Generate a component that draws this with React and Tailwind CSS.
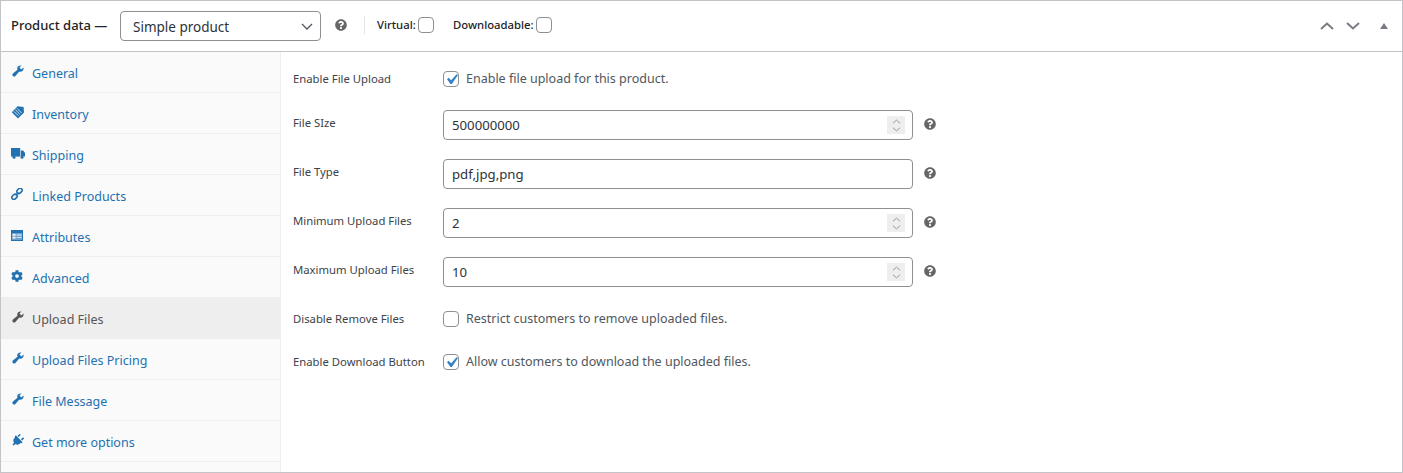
import { FaCog, FaPlug, FaQuestionCircle } from 'react-icons/fa';

const FONT = 'font-["Noto_Sans",sans-serif]';

function Wrench({ className }) {
  return (
    <svg viewBox="0 0 20 20" className={className} fill="currentColor">
      <path d="M16.68 9.77c-1.34 1.34-3.3 1.67-4.95.99l-5.41 6.52c-.99.99-2.59.99-3.58 0s-.99-2.59 0-3.58l6.52-5.41c-.68-1.65-.35-3.61.99-4.95 1.28-1.28 3.12-1.62 4.72-1.06l-2.89 2.89 2.82 2.82 2.86-2.87c.53 1.58.18 3.39-1.08 4.64z" />
    </svg>
  );
}

function Tag({ className }) {
  return (
    <svg viewBox="0 0 14 14" className={className} fill="currentColor">
      <path d="M6.6 1.2 12.6 2l.4 5.4-6 6L.8 7.2z" />
      <path d="M4.4 4.8 9 9.4M6 3.4l4.6 4.6M3 6.4l4.4 4.4" stroke="#fafafa" strokeWidth="0.8" fill="none" />
    </svg>
  );
}

function Truck({ className }) {
  return (
    <svg viewBox="0 0 14 11" className={className} fill="currentColor">
      <path d="M0 0h9.2v8.6H0z" />
      <path d="M9.8 2.6h2.4L14 5v3.6H9.8z" />
      <circle cx="3" cy="9.2" r="1.5" />
      <circle cx="11" cy="9.2" r="1.5" />
    </svg>
  );
}

function Chain({ className }) {
  return (
    <svg viewBox="0 0 12 12" className={className} fill="none" stroke="currentColor" strokeWidth="1.6">
      <rect x="5.6" y="0.8" width="5.8" height="4" rx="2" transform="rotate(-45 8.5 2.8)" />
      <rect x="0.6" y="6.8" width="5.8" height="4" rx="2" transform="rotate(-45 3.5 8.8)" />
      <path d="M4.6 7.4 7.4 4.6" />
    </svg>
  );
}

function CardIcon({ className }) {
  return (
    <svg viewBox="0 0 12 11" className={className} fill="currentColor">
      <path d="M0 0h12v11H0z" />
      <path d="M1 3h10v7H1z" fill="#6fa2cc" />
      <path d="M1.6 4h3v1.8h-3zM1.6 6.8h3v1.8h-3zM5.6 4.5h5v.9h-5zM5.6 7.2h5v.9h-5z" fill="#f2f6fa" />
    </svg>
  );
}

function Check() {
  return (
    <svg viewBox="0 0 20 20" className="w-[21px] h-[21px] shrink-0" fill="#3582c4">
      <path d="M14.83 4.89l1.34.94-5.81 8.38H9.02L5.78 9.67l1.34-1.25 2.57 2.4z" />
    </svg>
  );
}

function Checkbox({ checked }) {
  return (
    <span className="flex items-center justify-center w-4 h-4 rounded-[4px] border border-[#8c8f94] bg-white shrink-0">
      {checked && <Check />}
    </span>
  );
}

function Help({ className = '' }) {
  return <FaQuestionCircle className={`text-[#666] text-[12px] ${className}`} />;
}

function Spinner() {
  return (
    <span className="absolute right-[8px] top-[6px] w-[18px] h-[18px] bg-[#eee] flex flex-col items-center justify-center gap-[3px]">
      <svg viewBox="0 0 10 5" className="w-[9px] h-[5px]" fill="none" stroke="#8c8f94" strokeWidth="1"><path d="M1 4.5 5 1l4 3.5" /></svg>
      <svg viewBox="0 0 10 5" className="w-[9px] h-[5px]" fill="none" stroke="#8c8f94" strokeWidth="1"><path d="M1 .5 5 4l4-3.5" /></svg>
    </span>
  );
}

const tabs = [
  { label: 'General', icon: <Wrench className="w-[14px] h-[14px]" /> },
  { label: 'Inventory', icon: <Tag className="w-[14px] h-[14px]" /> },
  { label: 'Shipping', icon: <Truck className="w-[14px] h-[11px]" /> },
  { label: 'Linked Products', icon: <Chain className="w-[12px] h-[12px]" /> },
  { label: 'Attributes', icon: <CardIcon className="w-[12px] h-[11px]" /> },
  { label: 'Advanced', icon: <FaCog className="text-[12px]" /> },
  { label: 'Upload Files', icon: <Wrench className="w-[14px] h-[14px]" />, active: true },
  { label: 'Upload Files Pricing', icon: <Wrench className="w-[14px] h-[14px]" /> },
  { label: 'File Message', icon: <Wrench className="w-[14px] h-[14px]" /> },
  { label: 'Get more options', icon: <FaPlug className="text-[13px] rotate-45" /> },
];

function InputRow({ label, value, spin }) {
  return (
    <div className="flex items-center h-[30px] mb-[19px]">
      <label className="w-[150px] text-[11.3px] text-[#3c434a] -mt-[3px]">{label}</label>
      <div className="relative w-[470px] h-[30px]">
        <input readOnly value={value} className="w-full h-full border border-[#8c8f94] rounded-[4px] px-2 text-[13.2px] text-[#2c3338] bg-white outline-none" />
        {spin && <Spinner />}
      </div>
      <Help className="ml-[11px] -mt-[3px]" />
    </div>
  );
}

function CheckRow({ label, text, checked, className }) {
  return (
    <div className={`flex items-center h-[20px] ${className}`}>
      <label className="w-[150px] text-[11.3px] text-[#3c434a]">{label}</label>
      <Checkbox checked={checked} />
      <span className="ml-[7px] text-[12.5px] text-[#50575e]">{text}</span>
    </div>
  );
}

export default function App() {
  return (
    <div className={`w-[1403px] h-[473px] border border-[#c3c4c7] bg-white flex flex-col overflow-hidden ${FONT}`}>
      <div className="h-[51px] shrink-0 border-b border-[#c3c4c7] flex items-center pl-[10px] pr-[10px]">
        <span className="text-[13px] font-medium text-[#1d2327] w-[109px] -mt-[1px]">Product data —</span>
        <div className="relative w-[201px] h-[30px]">
          <select className="appearance-none w-full h-full border border-[#8c8f94] rounded-[4px] pl-3 pt-[2px] text-[13.5px] text-[#2c3338] bg-white outline-none">
            <option>Simple product</option>
          </select>
          <svg viewBox="0 0 12 7" className="absolute right-[8px] top-[12px] w-[12px] h-[7px]" fill="none" stroke="#50575e" strokeWidth="1.3"><path d="M1 1l5 5 5-5" /></svg>
        </div>
        <Help className="ml-[14px] -mt-[2px]" />
        <span className="ml-[17px] w-px h-[18px] bg-[#e5e5e5] -mt-[2px]" />
        <span className="ml-[12px] w-[38px] whitespace-nowrap text-[11.3px] font-medium text-[#1d2327] -mt-[2px]">Virtual:</span>
        <span className="ml-[3px] -mt-[2px]"><Checkbox /></span>
        <span className="ml-[19px] w-[80px] whitespace-nowrap text-[11.3px] font-medium text-[#1d2327] -mt-[2px]">Downloadable:</span>
        <span className="ml-[3px] -mt-[2px]"><Checkbox /></span>
        <div className="ml-auto flex items-center">
          <svg viewBox="0 0 14 8" className="w-[14px] h-[8px] mr-[12px]" fill="none" stroke="#787c82" strokeWidth="2"><path d="M1 7l6-5.5L13 7" /></svg>
          <svg viewBox="0 0 14 8" className="w-[14px] h-[8px] mr-[20px]" fill="none" stroke="#787c82" strokeWidth="2"><path d="M1 1l6 5.5L13 1" /></svg>
          <svg viewBox="0 0 8 6" className="w-[8px] h-[6px] mr-[4px]" fill="#787c82"><path d="M4 0l4 6H0z" /></svg>
        </div>
      </div>

      <div className="flex-1 flex min-h-0">
        <ul className="w-[279px] shrink-0 bg-[#fafafa] h-full">
          {tabs.map(t => (
            <li key={t.label} className={`h-[41px] flex items-center border-b ${t.active ? 'bg-[#eee] border-[#eee] text-[#555]' : 'border-[#eee] text-[#2271b1]'}`}>
              <span className="w-[31px] pl-[10px] shrink-0 flex -mt-[2px]">{t.icon}</span>
              <span className="text-[12.5px] pt-[4px]">{t.label}</span>
            </li>
          ))}
        </ul>
        <div className="flex-1 border-l border-[#eee] pl-[12px] pt-[17px]">
          <CheckRow label="Enable File Upload" text="Enable file upload for this product." checked className="mb-[21px]" />
          <InputRow label="File SIze" value="500000000" spin />
          <InputRow label="File Type" value="pdf,jpg,png" />
          <InputRow label="Minimum Upload Files" value="2" spin />
          <InputRow label="Maximum Upload Files" value="10" spin />
          <CheckRow label="Disable Remove Files" text="Restrict customers to remove uploaded files." className="mt-[22px] mb-[23px]" />
          <CheckRow label="Enable Download Button" text="Allow customers to download the uploaded files." checked />
        </div>
      </div>
    </div>
  );
}
